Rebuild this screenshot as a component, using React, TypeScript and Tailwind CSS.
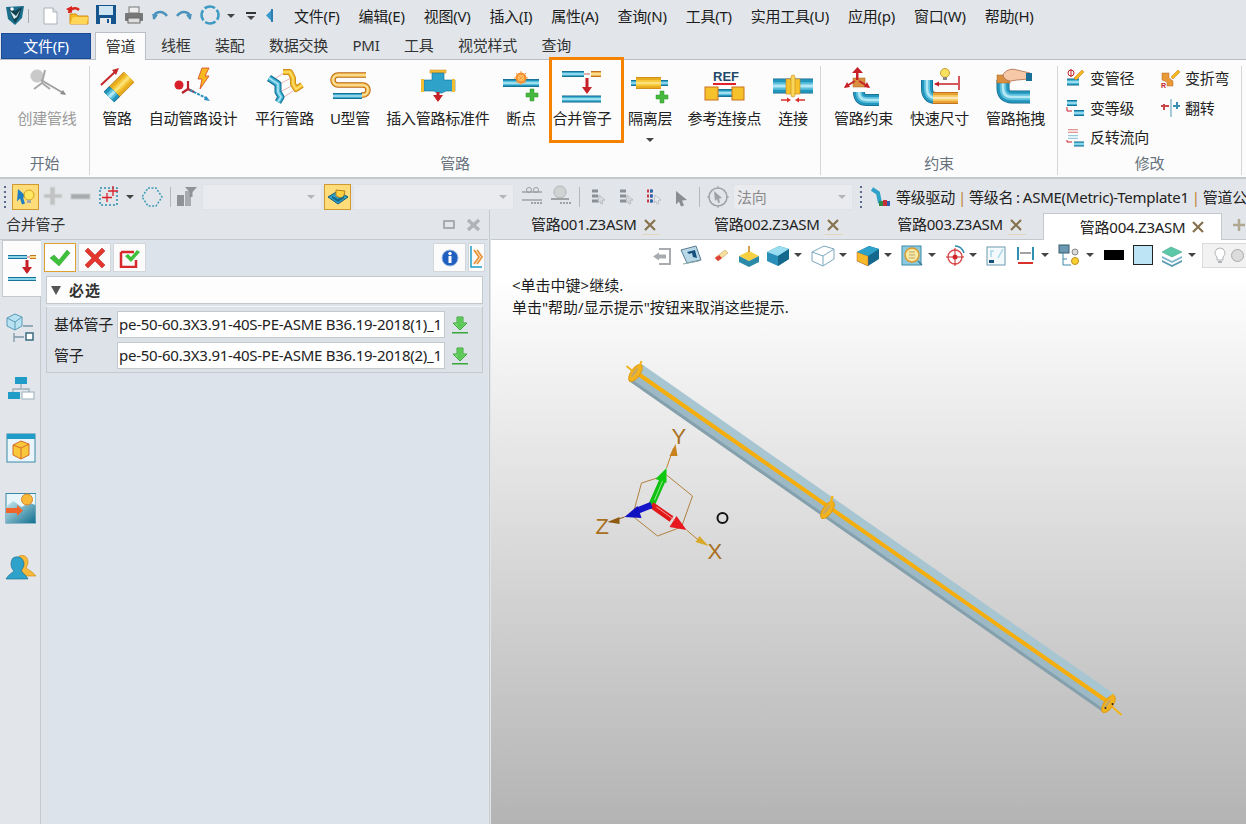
import type { ReactNode } from 'react'

// icons are drawn in page coordinates, so the viewBox is just the spot on the screenshot
function Ico({ x, y, w, h, className, children }: { x: number; y: number; w: number; h: number; className?: string; children: ReactNode }) {
  return (
    <svg width={w} height={h} viewBox={`${x} ${y} ${w} ${h}`} className={`shrink-0 ${className ?? ''}`}>
      {children}
    </svg>
  )
}

const BLUE = ['#14688c', '#2396bd', '#5cbfdc', '#b4e8f5']
const YEL = ['#c9861a', '#e8ae20', '#f6c838', '#fbe27a']
const ORG = ['#b5671c', '#e8a030', '#f5c860', '#fde9b8']

function Tube({ d, w, c = BLUE }: { d: string; w: number; c?: string[] }) {
  return (
    <g fill="none" strokeLinejoin="round">
      <path d={d} stroke={c[0]} strokeWidth={w} />
      <path d={d} stroke={c[1]} strokeWidth={w - 1.5} />
      <path d={d} stroke={c[2]} strokeWidth={w * 0.5} />
      <path d={d} stroke={c[3]} strokeWidth={Math.max(1, w * 0.2)} />
    </g>
  )
}

function DownArrow({ x, y, l, c = '#c62028' }: { x: number; y: number; l: number; c?: string }) {
  return (
    <g>
      <rect x={x - 1.500} y={y} width={3} height={l} fill={c} />
      <path d={`M${x - 5} ${y + l - 5}h10l-5 7z`} fill={c} />
    </g>
  )
}

function Plus({ x, y }: { x: number; y: number }) {
  return <path d={`M${x - 2} ${y - 6}h4v4h4v4h-4v4h-4v-4h-4v-4h4z`} fill="#46b93e" stroke="#2f9a2c" strokeWidth=".5" />
}

function Caret({ className }: { className?: string }) {
  return <span className={`w-0 h-0 shrink-0 border-x-[4px] border-x-transparent border-t-[4px] border-t-[#444] ${className ?? ''}`}></span>
}

const menu = ['文件(F)', '编辑(E)', '视图(V)', '插入(I)', '属性(A)', '查询(N)', '工具(T)', '实用工具(U)', '应用(p)', '窗口(W)', '帮助(H)']

function TopBar() {
  return (
    <div className="h-[32px] flex items-center bg-[#e2e6ea]">
      <Ico x={0} y={0} w={28} h={32}>
        <path d="M6 7l18 -1 -2 12 -7 7 -7-6z" fill="#1c6f8c" />
        <path d="M9 8l6 3 7-4-3 10-4 6-3-6z" fill="#12404f" />
        <path d="M10 11l6 5 4-6-3 7-3 2z" fill="#d8e8ec" />
        <circle cx={12} cy={9} r={1.8} fill="#fff" />
      </Ico>
      <span className="w-px h-[14px] bg-[#aaa] shrink-0"></span>
      <Ico x={29} y={0} w={30} h={32}>
        <path d="M44 8h9l4 4v12H44z" fill="#fff" stroke="#a9b1b8" />
        <path d="M53 8v4h4" fill="#dfe3e6" stroke="#a9b1b8" />
      </Ico>
      <Ico x={59} y={0} w={33} h={32}>
        <path d="M70 14h6l2 2h10v8H70z" fill="#f5b91e" stroke="#d3921a" />
        <path d="M70 24l3-7h15l-1 7z" fill="#ffd65a" />
        <path d="M69 13c1-5 7-6 10-3" fill="none" stroke="#d8261e" strokeWidth="2.5" />
        <path d="M66 9l6-3v7z" fill="#d8261e" />
      </Ico>
      <Ico x={92} y={0} w={28} h={32}>
        <path d="M96 5h20v19H96z" fill="#15548c" />
        <rect x={99} y={6} width={14} height={9} fill="#cfe5f2" />
        <rect x={100} y={18} width={11} height={6} fill="#e6e8ea" />
        <rect x={107} y={19} width={2} height={4} fill="#15548c" />
      </Ico>
      <Ico x={120} y={0} w={28} h={32}>
        <rect x={129} y={7} width={10} height={6} fill="#eee" stroke="#777" />
        <rect x={125} y={13} width={18} height={8} rx={1} fill="#777" />
        <rect x={128} y={18} width={12} height={5} fill="#ddd" stroke="#666" />
      </Ico>
      <Ico x={150} y={0} w={24} h={32}>
        <path d="M156 19c-1-7 8-10 13-3" fill="none" stroke="#4a93bd" strokeWidth="2.4" />
        <path d="M154 14l6 1-4 5z" fill="#4a93bd" />
      </Ico>
      <Ico x={178} y={0} w={24} h={32}>
        <path d="M196 19c1-7-8-10-13-3" fill="none" stroke="#4a93bd" strokeWidth="2.4" />
        <path d="M198 14l-6 1 4 5z" fill="#4a93bd" />
      </Ico>
      <Ico x={204} y={0} w={28} h={32}>
        <circle cx={218} cy={15} r={8.500} fill="none" stroke="#3e9bc4" strokeWidth="2.600" strokeDasharray="11 2.350" strokeDashoffset="6" />
      </Ico>
      <Caret className="ml-[3px]" />
      <span className="ml-[11px] w-[10px] flex flex-col items-center gap-[2px] shrink-0">
        <span className="w-[10px] h-[2px] bg-[#333]"></span>
        <Caret />
      </span>
      <Ico x={268} y={0} w={12} h={32} className="ml-[7px]">
        <path d="M271 15.500l5-5v10z" fill="#3a9ad0" />
        <rect x={276} y={9} width={2} height={13} fill="#2e7fb0" />
      </Ico>
      <div className="ml-[19px] flex gap-[19px] text-[#1c1c1c] whitespace-nowrap">
        {menu.map(m => <span key={m}>{m}</span>)}
      </div>
    </div>
  )
}

const tabs = ['线框', '装配', '数据交换', 'PMI', '工具', '视觉样式', '查询']

function TabBar() {
  return (
    <div className="h-[28px] flex items-end bg-[#e2e6ea] border-b border-[#b9bfc5] text-[#333]">
      <div className="ml-[1px] w-[90px] h-[26px] bg-[#2a5fb0] border border-[#1d4a94] text-white flex items-center justify-center">文件(F)</div>
      <div className="ml-[4px] w-[51px] h-[28px] -mb-px bg-[#fcfcfc] border border-b-0 border-[#b9bfc5] flex items-center justify-center">管道</div>
      <div className="ml-[15px] flex gap-[24.500px] h-[27px] items-center">
        {tabs.map(t => <span key={t}>{t}</span>)}
      </div>
    </div>
  )
}

function RibbonBtn({ label, className, disabled, more, children }: { label: string; className: string; disabled?: boolean; more?: boolean; children: ReactNode }) {
  return (
    <div className={`flex flex-col items-center shrink-0 ${className}`}>
      <div className="h-[40px] flex items-center justify-center">{children}</div>
      <span className={`mt-[2px] leading-[20px] whitespace-nowrap ${disabled ? 'text-[#9a9a9a]' : 'text-[#222]'}`}>{label}</span>
      {more && <Caret className="mt-[10px]" />}
    </div>
  )
}

function GroupLabel({ children }: { children: string }) {
  return <span className="mt-auto mb-[2px] text-center leading-[20px] text-[#68727c]">{children}</span>
}

function Ribbon() {
  return (
    <div className="h-[119px] bg-[#fcfcfc] border-b-2 border-[#c4c9ce] flex">
      <div className="w-[90px] mt-[6px] mb-[2px] border-r border-[#d4d7da] flex flex-col">
        <RibbonBtn label="创建管线" className="ml-[17px] w-[60px]" disabled>
          <Ico x={24} y={66} w={44} h={40}>
            <circle cx={36} cy={76} r={6.500} fill="#c9c9c9" stroke="#e2e2e2" strokeDasharray="2 1" />
            <path d="M40 80l24 14" stroke="#a0a0a0" strokeWidth="2" />
            <path d="M44 70l-3 13 -8 6M41 83l8 6" stroke="#a8a8a8" strokeWidth="2" fill="none" />
            <path d="M65 95l-6-1 3-4z" fill="#909090" />
          </Ico>
        </RibbonBtn>
        <GroupLabel>开始</GroupLabel>
      </div>

      <div className="w-[731px] mt-[6px] mb-[2px] border-r border-[#d4d7da] flex flex-col">
        <div className="flex h-[84px]">
          <RibbonBtn label="管路" className="ml-[7px] w-[40px]">
            <Ico x={98} y={66} w={38} h={40}>
              <path d="M101 85l15-14" stroke="#c6282a" strokeWidth="2" />
              <path d="M119 68l-7 2 4 5z" fill="#c6282a" />
              <Tube d="M129 77L113 93" w={15} c={YEL} />
              <Tube d="M114.500 91.500L109 97" w={15} />
            </Ico>
          </RibbonBtn>
          <RibbonBtn label="自动管路设计" className="ml-[11px] w-[90px]">
            <Ico x={174} y={66} w={40} h={40}>
              <circle cx={180} cy={85} r={4.500} fill="#d8202a" />
              <path d="M189 89v-8M189 89l-6 4M189 89l6 3" stroke="#b8202a" strokeWidth="2.2" />
              <path d="M191 90l18 9" stroke="#2e8fc0" strokeWidth="2" strokeDasharray="3 1" />
              <path d="M211 101l-6-1 2-4z" fill="#2e8fc0" />
              <path d="M203 68h7l-4 8h4l-9 13 2-10h-4z" fill="#f6b91e" stroke="#d8401e" strokeWidth=".8" />
            </Ico>
          </RibbonBtn>
          <RibbonBtn label="平行管路" className="ml-[17px] w-[59px]">
            <Ico x={264} y={66} w={40} h={40}>
              <path d="M272 80l12-8M277 85l13-7M281 91l11-6M283 97l9-6" stroke="#e6a0a0" strokeWidth=".8" />
              <Tube d="M282 72h7l3 6v6l3 5 6-4" w={6} c={YEL} />
              <Tube d="M268 78l9 6v8l3 5-3 5" w={7} />
            </Ico>
          </RibbonBtn>
          <RibbonBtn label="U型管" className="ml-[16px] w-[40px]">
            <Ico x={329} y={66} w={42} h={40}>
              <Tube d="M366 75H338a5 5 0 0 0 0 10h25a5 5 0 0 1 0 10h-2" w={5.500} c={ORG} />
              <Tube d="M333 96H362" w={6} />
            </Ico>
          </RibbonBtn>
          <RibbonBtn label="插入管路标准件" className="ml-[16px] w-[104px]">
            <Ico x={418} y={66} w={40} h={40}>
              <rect x={430} y={70} width={16} height={3} fill="#f3bd33" stroke="#c9861a" strokeWidth=".5" />
              <path d="M432 73h12v7h11v11h-9l-4 2h-5l-3-2h-10V80h8z" fill="#2ea2c8" stroke="#176f92" strokeWidth=".6" />
              <rect x={421} y={79} width={3} height={13} fill="#f3bd33" />
              <rect x={452} y={79} width={3} height={13} fill="#f3bd33" />
              <DownArrow x={438} y={92} l={8} />
            </Ico>
          </RibbonBtn>
          <RibbonBtn label="断点" className="ml-[16px] w-[30px]">
            <Ico x={500} y={66} w={42} h={40}>
              <Tube d="M503 83H539" w={8} />
              <circle cx={521} cy={78} r={5.500} fill="#f88a30" />
              <circle cx={521} cy={78} r={3} fill="#ffe080" />
              <path d="M521 71v14M514 78h14M516 73l10 10M526 73l-10 10" stroke="#f9a040" strokeWidth="1" />
              <Plus x={532} y={95} />
            </Ico>
          </RibbonBtn>
          <div className="relative ml-[16px] w-[60px] shrink-0">
            <RibbonBtn label="合并管子" className="w-[60px]">
              <Ico x={560} y={66} w={44} h={40}>
                <Tube d="M562 74H584" w={6} />
                <path d="M584 74h6" stroke="#c8605a" strokeWidth="1" />
                <Tube d="M591 74H601" w={6} c={ORG} />
                <DownArrow x={587} y={78} l={14} />
                <Tube d="M562 99H601" w={7} />
              </Ico>
            </RibbonBtn>
            <div className="absolute -left-[3px] -top-[9px] w-[75px] h-[86px] border-[3px] border-[#f58200]"></div>
          </div>
          <RibbonBtn label="隔离层" className="ml-[16px] w-[44px]" more>
            <Ico x={629} y={66} w={42} h={40}>
              <Tube d="M631 83H668" w={6} />
              <Tube d="M636 83H661" w={12} c={YEL} />
              <Plus x={662} y={97} />
            </Ico>
          </RibbonBtn>
          <RibbonBtn label="参考连接点" className="ml-[15px] w-[75px]">
            <Ico x={703} y={66} w={44} h={40}>
              <text x={713} y={81} fontSize="13" fontWeight="700" letterSpacing="0" fill="#1f4a6a" fontFamily="Liberation Sans, sans-serif">REF</text>
              <rect x={713} y={83} width={23} height={2} fill="#e0202a" />
              <Tube d="M716 93H734" w={8} />
              <rect x={705} y={87} width={13} height={13} fill="#f6c22c" stroke="#c9701c" />
              <rect x={732} y={87} width={12} height={13} fill="#f6c22c" stroke="#c9701c" />
            </Ico>
          </RibbonBtn>
          <RibbonBtn label="连接" className="ml-[16px] w-[30px]">
            <Ico x={771} y={66} w={44} h={40}>
              <Tube d="M773 86H813" w={15} />
              <rect x={786} y={79} width={14} height={15} fill="#f6c22c" stroke="#c9861a" strokeWidth=".6" />
              <rect x={791} y={75} width={4} height={22} rx={2} fill="#f9d65a" stroke="#c9861a" strokeWidth=".6" />
              <path d="M781 100h8M805 100h-8" stroke="#d8302a" strokeWidth="1.500" />
              <path d="M791 100l-4-2.500v5zM795 100l4-2.500v5z" fill="#d8302a" />
            </Ico>
          </RibbonBtn>
        </div>
        <GroupLabel>管路</GroupLabel>
      </div>

      <div className="w-[237px] mt-[6px] mb-[2px] border-r border-[#d4d7da] flex flex-col">
        <div className="flex">
          <RibbonBtn label="管路约束" className="ml-[13px] w-[59px]">
            <Ico x={841} y={66} w={44} h={40}>
              <Tube d="M858 92c0 6 3 8 8 8H878" w={12} />
              <rect x={852} y={78} width={12} height={9} fill="#d89040" stroke="#a8601c" strokeWidth=".5" />
              <rect x={855} y={70} width={2.500} height={10} fill="#c62028" />
              <path d="M851 73h11l-5.500-6z" fill="#c62028" />
              <path d="M844 87l10-6M868 87l-10-6" stroke="#c62028" strokeWidth="2" />
              <path d="M843 88l3-6 3 5zM869 88l-3-6-3 5z" fill="#c62028" />
            </Ico>
          </RibbonBtn>
          <RibbonBtn label="快速尺寸" className="ml-[17px] w-[59px]">
            <Ico x={917} y={66} w={44} h={40}>
              <Tube d="M926 80v8c0 7 3 10 9 10" w={12} />
              <Tube d="M932 98H957" w={12} c={ORG} />
              <circle cx={944} cy={73} r={4.500} fill="#f8e060" stroke="#c9a030" />
              <rect x={942} y={77} width={4} height={3} fill="#888" />
              <path d="M934 84h23" stroke="#c62028" strokeWidth="1.500" />
              <path d="M958 76v14" stroke="#c62028" strokeWidth="1.500" />
              <path d="M933 84l5-2.500v5z" fill="#c62028" />
            </Ico>
          </RibbonBtn>
          <RibbonBtn label="管路拖拽" className="ml-[17px] w-[59px]">
            <Ico x={993} y={66} w={44} h={40}>
              <Tube d="M1002 80v8c0 6 3 9 9 9h18" w={13} />
              <rect x={996} y={75} width={13} height={8} fill="#d89040" stroke="#a8601c" strokeWidth=".5" />
              <path d="M1002 75c2-5 9-7 14-5l13 3-1 6-12 1-6 1c-4 0-7-2-8-6z" fill="#f6c8a8" stroke="#a05a3a" strokeWidth=".7" />
              <rect x={1025} y={73} width={6} height={8} fill="#1a6f96" />
            </Ico>
          </RibbonBtn>
        </div>
        <GroupLabel>约束</GroupLabel>
      </div>

      <div className="w-[184px] mt-[6px] mb-[2px] border-r border-[#d4d7da] flex flex-col">
        <div className="ml-[8px] mt-[2px] grid grid-cols-[94px_auto] gap-y-[9.500px] leading-[20px] text-[#222] whitespace-nowrap">
          <div className="flex items-center gap-[6px]">
            <Ico x={1066} y={68} w={18} h={20}>
              <Tube d="M1067 82h12" w={7} />
              <path d="M1074 78l8-8 2 2-8 8z" fill="#f6b91e" stroke="#c9701c" strokeWidth=".5" />
              <circle cx={1071} cy={73} r={3} fill="none" stroke="#c62028" />
              <path d="M1071 69v8" stroke="#c62028" />
            </Ico>
            <span>变管径</span>
          </div>
          <div className="flex items-center gap-[5px]">
            <Ico x={1160} y={68} w={20} h={20}>
              <path d="M1162 73h7v5l4 3v5h-6v-4l-5-2z" fill="#e89a38" stroke="#b5671c" strokeWidth=".5" />
              <path d="M1171 77l7-7 2 2-7 7z" fill="#f6b91e" stroke="#c9701c" strokeWidth=".5" />
              <text x={1161} y={88} fontSize="7" fontWeight="700" fill="#c62028" fontFamily="Liberation Sans, sans-serif">R</text>
            </Ico>
            <span>变折弯</span>
          </div>
          <div className="flex items-center gap-[6px]">
            <Ico x={1066} y={98} w={18} h={20}>
              <Tube d="M1067 103H1077" w={6} />
              <Tube d="M1074 113H1084" w={6} />
              <path d="M1067 107v4h5" fill="none" stroke="#c62028" />
            </Ico>
            <span>变等级</span>
          </div>
          <div className="flex items-center gap-[5px]">
            <Ico x={1160} y={98} w={20} h={20}>
              <path d="M1171 99v18" stroke="#a6cbd8" strokeWidth="2" />
              <path d="M1161 106h8M1164 104v6" stroke="#c6484a" strokeWidth="2" />
              <path d="M1173 106h7M1177 102v7" stroke="#3a90b4" strokeWidth="2" />
            </Ico>
            <span>翻转</span>
          </div>
          <div className="flex items-center gap-[6px]">
            <Ico x={1066} y={127} w={18} h={20}>
              <Tube d="M1068 131H1078" w={4} c={['#d88a8a', '#f0c0c0', '#f4d0d0', '#fbe4e4']} />
              <Tube d="M1068 137H1078" w={4} c={['#8ac0d4', '#bde3f0', '#d4edf5', '#eaf7fb']} />
              <Tube d="M1074 144H1084" w={5} />
              <path d="M1067 140v2h5" stroke="#c62028" fill="none" />
            </Ico>
            <span>反转流向</span>
          </div>
        </div>
        <GroupLabel>修改</GroupLabel>
      </div>
    </div>
  )
}

function Combo({ className, text }: { className: string; text?: string }) {
  return (
    <div className={`h-[26px] bg-[#e9ebee] border border-[#dfe2e6] flex items-center shrink-0 text-[#8a8a8a] ${className}`}>
      <span className="ml-[3px]">{text}</span>
      <span className="ml-auto mr-[6px] w-0 h-0 border-x-[4px] border-x-transparent border-t-[4px] border-t-[#b5b5b5]"></span>
    </div>
  )
}

function Grip({ className }: { className?: string }) {
  return (
    <span className={`flex flex-col gap-[3px] shrink-0 ${className ?? ''}`}>
      <span className="w-[2px] h-[2px] bg-[#5a6a90]"></span>
      <span className="w-[2px] h-[2px] bg-[#5a6a90]"></span>
      <span className="w-[2px] h-[2px] bg-[#5a6a90]"></span>
      <span className="w-[2px] h-[2px] bg-[#5a6a90]"></span>
      <span className="w-[2px] h-[2px] bg-[#5a6a90]"></span>
    </span>
  )
}

function SelectIcon({ x, c = '#8a8f96' }: { x: number; c?: string }) {
  return (
    <Ico x={x} y={186} w={18} h={22}>
      <path d={`M${x + 3} 191h6M${x + 3} 196h6M${x + 3} 201h6`} stroke={c} strokeWidth="3" />
      <path d={`M${x + 10} 195l6 5-3 .5 1 3-2 .5-1-3-2 2z`} fill="#d8dadd" stroke="#9a9ea3" strokeWidth=".5" />
    </Ico>
  )
}

function Sep({ className }: { className: string }) {
  return <span className={`w-px h-[20px] bg-[#b5b9bd] shrink-0 ${className}`}></span>
}

function Toolbar() {
  return (
    <div className="h-[31px] bg-[#e2e6ea] flex items-center overflow-hidden whitespace-nowrap pt-[5px]">
      <Grip className="ml-[4px]" />
      <div className="ml-[6px] w-[27px] h-[26px] shrink-0 bg-[#ffdc7a] border border-[#d09a30] flex items-center justify-center">
        <svg width="22" height="20" viewBox="0 0 22 20">
          <path d="M3 2l9 8-4 .5 2 6-3 1-2-6-3 3z" fill="#1f7fc0" />
          <circle cx={14} cy={8} r={5} fill="#ffe860" stroke="#d8a020" />
          <rect x={12} y={13} width={4} height={3} fill="#a8a8a8" />
        </svg>
      </div>
      <Ico x={42} y={184} w={22} h={26} className="ml-[3px]">
        <path d="M50 187h5v7h7v4h-7v7h-5v-7h-6v-4h6z" fill="#c0c2c4" stroke="#d8dadc" />
      </Ico>
      <Ico x={68} y={184} w={24} h={26} className="ml-[4px]">
        <rect x={71} y={194} width={19} height={5} fill="#a8aaac" stroke="#c8cacc" />
      </Ico>
      <Ico x={96} y={184} w={24} h={26} className="ml-[4px]">
        <rect x={100} y={188} width={17} height={17} fill="none" stroke="#2e8fb0" strokeWidth="1.500" strokeDasharray="2 2" />
        <path d="M113 186v10M108 191h10M107 193v9M102 197.500h10" stroke="#d8202a" strokeWidth="1.300" />
      </Ico>
      <Caret className="ml-[6px]" />
      <Ico x={138} y={184} w={28} h={26} className="ml-[4px]">
        <path d="M148 188h8l6 9-6 9h-8l-6-9z" fill="none" stroke="#3e9bb8" strokeWidth="1.500" strokeDasharray="2 1.500" />
      </Ico>
      <Sep className="ml-[4px]" />
      <Ico x={175} y={184} w={26} h={26} className="ml-[3px]">
        <rect x={178} y={195} width={7} height={11} fill="#8f9397" />
        <rect x={186} y={191} width={6} height={15} fill="#a8acb0" />
        <path d="M186 187h12l-4.500 5v5h-3v-5z" fill="#8f9397" />
      </Ico>
      <Combo className="ml-[2px] w-[120px]" />
      <div className="ml-[2px] w-[27px] h-[26px] bg-[#ffdc7a] border border-[#d09a30] flex items-center justify-center shrink-0">
        <svg width="24" height="22" viewBox="0 0 24 22">
          <path d="M2 11l10-6 10 6-10 7z" fill="#2ea2c8" stroke="#145a7c" />
          <path d="M10 4l9 1-2 8-7-3z" fill="#ffd040" stroke="#b8801c" />
          <path d="M6 10l6 3 6-3v2l-6 4-6-4z" fill="#14688c" />
        </svg>
      </div>
      <Combo className="ml-[2px] w-[161px]" />
      <Ico x={518} y={184} w={28} h={26} className="ml-[4px]">
        <path d="M522 192h20M522 200h20" stroke="#a0a3a6" strokeWidth="1.500" />
        <circle cx={529} cy={190} r={2.500} fill="none" stroke="#9a9da0" />
        <circle cx={536} cy={190} r={2.500} fill="none" stroke="#9a9da0" />
        <path d="M531 203h11" stroke="#a0a3a6" strokeWidth="2" strokeDasharray="2 1" />
      </Ico>
      <Ico x={546} y={184} w={28} h={26}>
        <circle cx={560} cy={192} r={6} fill="#d0d2d4" stroke="#b0b2b4" />
        <path d="M551 199h18" stroke="#a0a3a6" strokeWidth="2" />
        <path d="M560 203h11" stroke="#a0a3a6" strokeWidth="2" strokeDasharray="2 1" />
      </Ico>
      <Sep className="ml-[5px]" />
      <span className="ml-[9px] flex"><SelectIcon x={589} /></span>
      <span className="ml-[10px] flex"><SelectIcon x={617} /></span>
      <span className="ml-[10px] flex">
        <Ico x={645} y={186} w={18} h={22}>
          <path d="M647 191h6M647 196h6M647 201h6" stroke="#c8384a" strokeWidth="3" strokeDasharray="2 1" />
          <path d="M650 191h3M650 196h3M650 201h3" stroke="#2e6ab0" strokeWidth="3" />
          <path d="M655 195l6 5-3 .5 1 3-2 .5-1-3-2 2z" fill="#e8eaec" stroke="#9a9ea3" strokeWidth=".5" />
        </Ico>
      </span>
      <Ico x={673} y={186} w={20} h={22} className="ml-[10px]">
        <path d="M676 191l11 9-5 .5 2 5-3 1-2-5-3 3z" fill="#8a8d91" />
      </Ico>
      <Sep className="ml-[6px]" />
      <Ico x={704} y={184} w={28} h={26} className="ml-[4px]">
        <circle cx={718} cy={197} r={9} fill="none" stroke="#a0a3a6" strokeWidth="1.500" />
        <path d="M718 186v3M718 205v3M707 197h3M726 197h3" stroke="#a0a3a6" />
        <path d="M714 191l8 7-3 .5 1 4-2 .5-1-4-2 2z" fill="#a0a3a6" />
      </Ico>
      <Combo className="ml-[1px] w-[120px]" text="法向" />
      <Grip className="ml-[7px]" />
      <Ico x={868} y={184} w={24} h={26} className="ml-[6px]">
        <path d="M872 189l6 4 2 10" fill="none" stroke="#2ea2c8" strokeWidth="4" />
        <rect x={879} y={201} width={4} height={5} fill="#2e8a48" />
        <rect x={883} y={200} width={4} height={6} fill="#c8303a" />
        <rect x={887} y={201} width={3} height={5} fill="#2e5fb0" />
      </Ico>
      <span className="ml-[4px] text-[#222] [word-spacing:-0.700px]">等级驱动 <span className="text-[#c08030]">|</span> 等级名 : ASME(Metric)-Template1 <span className="text-[#c08030]">|</span> 管道公</span>
    </div>
  )
}

function DownloadBtn() {
  return (
    <svg width="18" height="20" viewBox="0 0 18 20" className="shrink-0 block">
      <path d="M6 2h6v6h4l-7 7-7-7h4z" fill="#7fdc78" stroke="#3aa63a" />
      <path d="M7 3h4v6h3l-5 5-3-3z" fill="#5cc858" />
      <rect x={1} y={17} width={16} height={1.500} fill="#3aa63a" />
    </svg>
  )
}

function SideTab({ className, children }: { className: string; children: ReactNode }) {
  return <div className={`flex justify-center ${className}`}>{children}</div>
}

function Panel() {
  return (
    <div className="w-[488px] shrink-0 flex flex-col bg-[#e2e6ea]">
      <div className="h-[29px] flex items-center text-[#333]">
        <span className="ml-[6px]">合并管子</span>
        <span className="ml-auto w-[12px] h-[9px] border-[2px] border-[#a8acb0] rounded-[1px]"></span>
        <svg width="15" height="12" viewBox="0 0 15 12" className="ml-[11px] mr-[7px]">
          <path d="M2 1l11 10M13 1L2 11" stroke="#b0b4b8" strokeWidth="3.500" />
        </svg>
      </div>
      <div className="flex-1 flex min-h-0 border-t border-[#c4c9ce]">
        <div className="w-[41px] shrink-0 flex flex-col items-start pl-[2px] border-r border-[#c4c9ce]">
          <div className="w-[39px] -mr-px h-[57px] bg-[#fcfcfc] border border-[#c4c9ce] border-r-0 flex items-center justify-center relative">
            <svg width="30" height="30" viewBox="0 0 30 30">
              <Tube d="M1 3H20" w={4} />
              <path d="M20 3h3" stroke="#c8605a" />
              <Tube d="M23 3H29" w={4} c={ORG} />
              <DownArrow x={20} y={6} l={12} />
              <Tube d="M1 25H29" w={4} />
            </svg>
          </div>
          <SideTab className="w-[37px] mt-[16px]">
            <svg width="30" height="30" viewBox="6 313 30 30">
              <path d="M7 318l8-4 7 3v9l-7 4-8-4z" fill="#b8e2f2" stroke="#5a9ab8" />
              <path d="M15 322v8M7 318l8 4 7-5" fill="none" stroke="#5a9ab8" />
              <path d="M23 326h10M14 333v9M14 337h10" stroke="#7a98a8" strokeWidth="1.300" />
              <rect x={26} y={333} width={7} height={7} fill="#fff" stroke="#3a6a80" strokeWidth="1.500" />
            </svg>
          </SideTab>
          <SideTab className="w-[37px] mt-[31px]">
            <svg width="28" height="26" viewBox="6 374 28 26">
              <rect x={14} y={377} width={12} height={7} fill="#1f9cc8" />
              <path d="M20 384v5M12 393v-4h16v4" fill="none" stroke="#9ab0bc" strokeWidth="1.300" />
              <rect x={7} y={392} width={12} height={7} fill="#1f9cc8" />
              <rect x={21} y={392} width={12} height={7} fill="#fff" stroke="#9ab0bc" />
            </svg>
          </SideTab>
          <SideTab className="w-[37px] mt-[33px]">
            <svg width="30" height="30" viewBox="5 433 30 30">
              <rect x={6} y={434} width={28} height={28} fill="#eaf6fb" stroke="#3a8aa8" />
              <rect x={6} y={434} width={28} height={5} fill="#1f9cc8" />
              <path d="M12 445l8-4 8 3v11l-8 4-8-4z" fill="#f8c83a" stroke="#d86a2a" />
              <path d="M12 445l8 3 8-4M20 448v11" fill="none" stroke="#d86a2a" />
            </svg>
          </SideTab>
          <SideTab className="w-[37px] mt-[30px]">
            <svg width="31" height="31" viewBox="4 493 31 31">
              <defs>
                <linearGradient id="hill" x1="0" y1="0" x2="1" y2="1">
                  <stop offset="0" stopColor="#c8e8f2" />
                  <stop offset="1" stopColor="#12708f" />
                </linearGradient>
              </defs>
              <rect x={5} y={493.500} width={30} height={29.500} fill="#e8f6fa" stroke="#3a8aa8" />
              <path d="M5.500 506l7-5 8 6 8-4 6 2v18H5.500z" fill="url(#hill)" />
              <circle cx={26} cy={499.500} r={5.500} fill="#f8b83a" stroke="#d8862a" />
              <path d="M5 508h11v-3l6 5.500-6 5.500v-3H5z" fill="#f0662a" />
            </svg>
          </SideTab>
          <SideTab className="w-[37px] mt-[31px]">
            <svg width="31" height="26" viewBox="4 555 31 26">
              <path d="M18 556c5-2 9 1 9 6 0 3-1 4-2 6 3 2 7 4 10 8H22z" fill="#f6b93a" stroke="#c9861a" strokeWidth=".6" />
              <path d="M12 558c5-3 11 0 11 6 0 3-2 5-3 7 2 2 5 4 7 8H5c2-4 6-6 8-8-2-2-3-4-3-7 0-3 1-5 2-6z" fill="#2ea2c8" stroke="#14688c" strokeWidth=".6" />
            </svg>
          </SideTab>
        </div>
        <div className="flex-1 min-w-0 bg-[#dde3eb] flex flex-col pl-[3px] pr-[3px] pt-[3px]">
          <div className="h-[29px] flex items-stretch">
            <div className="w-[32px] bg-[#fdfdfd] border border-[#e0a030] flex items-center justify-center">
              <svg width="22" height="18" viewBox="0 0 22 18"><path d="M1 9l4-3 5 5 8-10 3 3-11 13z" fill="#3fc03a" stroke="#2a9a2a" strokeWidth=".5" /></svg>
            </div>
            <div className="ml-[2px] w-[33px] bg-[#fbfbfb] border border-[#d4d7da] flex items-center justify-center">
              <svg width="22" height="22" viewBox="0 0 22 22"><path d="M4 1l7 7 7-7 3 3-7 7 7 7-3 3-7-7-7 7-3-3 7-7-7-7z" fill="#e2362e" stroke="#b8201e" strokeWidth=".5" /></svg>
            </div>
            <div className="ml-[2px] w-[33px] bg-[#fbfbfb] border border-[#d4d7da] flex items-center justify-center">
              <svg width="22" height="20" viewBox="0 0 22 20">
                <path d="M2 4h13M2 4v15h15v-7" fill="none" stroke="#d8282a" strokeWidth="2.500" />
                <path d="M6 8l3-2 3 3 6-7 3 2-9 10z" fill="#3fc03a" />
              </svg>
            </div>
            <div className="ml-auto w-[33px] bg-[#fbfbfb] border border-[#d4d7da] flex items-center justify-center">
              <svg width="18" height="18" viewBox="0 0 18 18">
                <circle cx={9} cy={9} r={8} fill="#1f5fc0" stroke="#9ab8e0" />
                <rect x={7.500} y={7} width={3} height={7} fill="#fff" />
                <circle cx={9} cy={4.500} r={1.700} fill="#fff" />
              </svg>
            </div>
            <div className="ml-[2px] w-[17px] bg-[#fbfbfb] border border-[#d4d7da] flex items-center justify-center">
              <svg width="15" height="25" viewBox="0 0 15 25">
                <path d="M2 1v21h11" fill="none" stroke="#1f9cc8" strokeWidth="1.500" />
                <path d="M5 5l5 7-5 7M8 5l5 7-5 7" fill="none" stroke="#e8943a" strokeWidth="1.800" />
              </svg>
            </div>
          </div>
          <div className="mt-[4px] ml-[2px] mr-[2px] h-[28px] bg-[#fdfdfd] border border-[#c4c9ce] flex items-center font-bold text-[#333]">
            <span className="ml-[4px] w-0 h-0 border-x-[5px] border-x-transparent border-t-[9px] border-t-[#555]"></span>
            <span className="ml-[8px] tracking-[1px]">必选</span>
          </div>
          <div className="mt-[2px] ml-[2px] mr-[2px] h-[67px] border border-[#c4c9ce] bg-[#dde1e8] border-t-[#f2f4f6] pl-[7px] flex flex-col gap-[4px] pt-[4px] text-[#222]">
            {[['基体管子', '(1)_1'], ['管子', '(2)_1']].map(([label, suffix]) => (
              <div key={label} className="flex items-center h-[27px]">
                <span className="w-[63px] shrink-0 whitespace-nowrap">{label}</span>
                <div className="w-[328px] h-[27px] shrink-0 bg-white border border-[#c4c9ce] overflow-hidden whitespace-nowrap pl-[1px] leading-[25px]">{`pe-50-60.3X3.91-40S-PE-ASME B36.19-2018${suffix}`}</div>
                <span className="ml-[6px] flex"><DownloadBtn /></span>
              </div>
            ))}
          </div>
        </div>
      </div>
    </div>
  )
}

function CloseX({ line }: { line?: boolean }) {
  return (
    <span className="relative flex shrink-0">
      <svg width="14" height="12" viewBox="0 0 14 12">
        <path d="M2 1l10 10M12 1L2 11" stroke="#85724e" strokeWidth="2.200" />
      </svg>
      {line && <span className="absolute -left-[1px] -right-[3px] -bottom-[4px] h-px bg-[#e0d8b8]"></span>}
    </span>
  )
}

const docs = ['管路001.Z3ASM', '管路002.Z3ASM', '管路003.Z3ASM']

function DocTabs() {
  return (
    <div className="h-[30px] shrink-0 bg-[#e2e6ea] flex items-end text-[#222] whitespace-nowrap border-b border-[#c4c9ce]">
      <div className="ml-[40px] flex gap-[57.500px] h-[29px] items-center">
        {docs.map(d => (
          <span key={d} className="flex items-center gap-[6px]">{d}<CloseX line /></span>
        ))}
      </div>
      <div className="ml-[20px] w-[179px] h-[27px] -mb-px bg-white border border-b-0 border-[#c4c9ce] flex items-center pl-[36px] gap-[6px]">
        管路004.Z3ASM<CloseX />
      </div>
      <svg width="14" height="14" viewBox="0 0 14 14" className="ml-[10px] mb-[7px] shrink-0">
        <path d="M7 1v12M1 7h12" stroke="#b0a890" strokeWidth="2.500" />
      </svg>
    </div>
  )
}

function ViewBar() {
  return (
    <div className="h-[30px] flex items-center pl-[161px] overflow-hidden">
      <Ico x={653} y={241} w={22} h={28}>
        <path d="M660 249h11v15h-11" fill="none" stroke="#a8acb0" strokeWidth="2" />
        <path d="M654 256.500l6-4v2h7v4h-7v2z" fill="#a8acb0" />
      </Ico>
      <Ico x={679} y={241} w={26} h={28} className="ml-[4px]">
        <path d="M682 250l15-4 5 14-14 3z" fill="#b8d8e8" stroke="#5a7a90" />
        <path d="M688 252l8-2 2 8-4-1-1-4-3 1z" fill="#14507c" />
        <path d="M684 264l16-3" stroke="#8aa" />
      </Ico>
      <Ico x={712} y={241} w={20} h={28} className="ml-[7px]">
        <path d="M716 258l10-8 3 3-10 8z" fill="#f6e0a0" stroke="#b89040" strokeWidth=".5" />
        <path d="M716 258l4-3 3 3-4 3z" fill="#e0403a" />
      </Ico>
      <Ico x={738} y={241} w={24} h={28} className="ml-[6px]">
        <path d="M740 256l10-5 10 5-10 5z" fill="#f6d040" />
        <path d="M740 256l10 5v6l-10-5zM760 256l-10 5v6l10-5z" fill="#2a8aa8" />
        <path d="M750 252v-6" stroke="#c9801c" strokeWidth="1.500" />
      </Ico>
      <Ico x={767} y={241} w={25} h={28} className="ml-[5px]">
        <path d="M768 252l12-6 10 3v10l-11 7-11-5z" fill="#2a8fb8" />
        <path d="M768 252l11 4 11-7-10-3z" fill="#9adcf0" />
        <path d="M779 256v10l11-7V249z" fill="#14688c" />
      </Ico>
      <Caret className="ml-[3px]" />
      <Ico x={810} y={241} w={26} h={28} className="ml-[8px]">
        <path d="M812 252l12-6 10 3v10l-11 7-11-5z" fill="#fff" stroke="#7aa8c0" />
        <path d="M812 252l11 4 11-7M823 256v10" fill="none" stroke="#7aa8c0" />
      </Ico>
      <Caret className="ml-[3px]" />
      <Ico x={854} y={241} w={26} h={28} className="ml-[8px]">
        <path d="M856 252l12-6 10 3v10l-11 7-11-5z" fill="#14688c" />
        <path d="M856 252l11 4v10l-11-5z" fill="#f6b92c" stroke="#c96a1c" strokeWidth=".5" />
        <path d="M867 256l11-7-10-3-12 6z" fill="#2ea2c8" />
      </Ico>
      <Caret className="ml-[3px]" />
      <Ico x={898} y={241} w={24} h={28} className="ml-[8px]">
        <rect x={900} y={246} width={19} height={19} fill="#8ccae0" stroke="#3a8aa8" />
        <circle cx={910} cy={255} r={7} fill="#f8e8a0" stroke="#d89a30" strokeWidth="1.500" />
        <path d="M907 252h6M907 255h6M907 258h6" stroke="#b8a878" />
        <path d="M916 261l4 4" stroke="#3a7a98" strokeWidth="1.500" />
      </Ico>
      <Caret className="ml-[4px]" />
      <Ico x={944} y={241} w={22} h={28} className="ml-[8px]">
        <circle cx={955} cy={257} r={7} fill="none" stroke="#d8484a" strokeWidth="1.300" />
        <circle cx={955} cy={257} r={2.500} fill="#d8282a" />
        <path d="M946 257h18M955 248v18" stroke="#c8282a" />
        <path d="M955 246a10 10 0 0 1 9 7" fill="none" stroke="#2e8fb0" strokeWidth="1.500" />
      </Ico>
      <Caret className="ml-[3px]" />
      <Ico x={986} y={241} w={24} h={28} className="ml-[7px]">
        <rect x={989} y={247} width={18} height={18} fill="#f4f9fb" stroke="#6a9ab0" />
        <path d="M996 251h-3v6M1005 249l-5 9" fill="none" stroke="#a8d8e8" strokeWidth="1.500" />
        <rect x={991} y={260} width={5} height={3} fill="#14507c" />
      </Ico>
      <Ico x={1018} y={241} w={20} h={28} className="ml-[8px]">
        <path d="M1020 247v13M1035 247v13" stroke="#2e8fb0" strokeWidth="2" />
        <path d="M1022 253h11" stroke="#444" />
        <path d="M1020 263h15" stroke="#d8302a" strokeWidth="2" />
      </Ico>
      <Caret className="ml-[5px]" />
      <Ico x={1060} y={241} w={24} h={28} className="ml-[9px]">
        <rect x={1061} y={245} width={10} height={8} fill="#6a98b0" stroke="#385a70" />
        <path d="M1065 253v12h8M1065 259h4" fill="none" stroke="#3a8aa8" />
        <circle cx={1077} cy={252} r={3} fill="#d8dadc" stroke="#888" />
        <circle cx={1077} cy={261} r={3.500} fill="#f8d030" stroke="#c09020" />
      </Ico>
      <Caret className="ml-[4px]" />
      <span className="ml-[10px] w-[20px] h-[10px] shrink-0 bg-black"></span>
      <span className="ml-[9px] w-[20px] h-[20px] shrink-0 bg-[#bde4f4] border border-[#222]"></span>
      <Ico x={1162} y={241} w={24} h={28} className="ml-[8px]">
        <path d="M1163 260l10 5 10-5v2l-10 5-10-5z" fill="#5a9ab0" />
        <path d="M1163 256l10 5 10-5v2l-10 5-10-5z" fill="#7ab4c8" />
        <path d="M1163 252l9-5 11 5-10 5z" fill="#5cc8a8" stroke="#3a9a80" strokeWidth=".5" />
      </Ico>
      <Caret className="ml-[3px]" />
      <div className="ml-[6px] w-[60px] h-[25px] shrink-0 bg-[#f2f2f2] border border-[#d8dadc] flex items-center pl-[11px] gap-[5px]">
        <svg width="12" height="17" viewBox="0 0 12 17">
          <path d="M6 1a5 5 0 0 0-3 9v3h6v-3a5 5 0 0 0-3-9z" fill="#fff" stroke="#b0b2b4" />
          <rect x={4} y={14} width={4} height={2} fill="#b0b2b4" />
        </svg>
        <span className="w-[13px] h-[13px] rounded-full border border-[#a8aaac] bg-[#dcdcdc]"></span>
      </div>
    </div>
  )
}

function Flange({ cx, cy }: { cx: number; cy: number }) {
  return (
    <g transform={`translate(${cx} ${cy}) rotate(35)`}>
      <ellipse rx={4.500} ry={10} fill="#f3b31c" stroke="#e09a10" />
      <ellipse cx={-1} rx={1.500} ry={6} fill="#c9a860" />
    </g>
  )
}

function Scene() {
  return (
    <svg viewBox="492 240 754 584" className="absolute inset-0 w-full h-full">
      {/* pipe */}
      <path d="M636 372L1110 703" stroke="#a8c6d2" strokeWidth="20" />
      <path d="M633 376L1107 707" stroke="#9cb9c5" strokeWidth="9" />
      <path d="M630.500 380L1104.500 711" stroke="#84a0ac" strokeWidth="3" />
      <path d="M636 372L1110 703" stroke="#f5ae0c" strokeWidth="4" />
      <Flange cx={636} cy={373} />
      <path d="M627 366l6 5M642 361l-3 8" stroke="#f3b31c" strokeWidth="2" />
      <Flange cx={828} cy={510} />
      <path d="M833 496l-2 8" stroke="#f3b31c" strokeWidth="2.500" />
      <Flange cx={1109} cy={704} />
      <path d="M1113 707l9 8M1114 694l-4 6" stroke="#f3b31c" strokeWidth="2" />
      <circle cx={1106} cy={708} r={1} fill="#223" />
      <circle cx={1113} cy={704} r={1} fill="#223" />

      {/* triad */}
      <path d="M642 483L667 475L693 496L682 527L658 536L633 516Z" fill="none" stroke="#b08040" strokeWidth="1" />
      <path d="M667 468L674 448" stroke="#b8862c" strokeWidth="1" />
      <path d="M676 444l2 12-8 0z" fill="#c8821c" />
      <path d="M625 517L610 522" stroke="#8a5a1c" strokeWidth="1" />
      <path d="M608 522l12-5 0 7z" fill="#8f5a14" />
      <path d="M687 530L700 541" stroke="#b8862c" strokeWidth="1" />
      <path d="M709 546l-13-4 4-6z" fill="#d8a828" />
      <path d="M652 505L664 478" stroke="#12c012" strokeWidth="6.500" />
      <path d="M667 468l0 15-11-4z" fill="#10c810" />
      <path d="M655 500L663 481" stroke="#8ff08f" strokeWidth="1" />
      <path d="M652 505L672 519" stroke="#e01818" strokeWidth="6.500" />
      <path d="M687 530l-17-3 7-11z" fill="#e81820" />
      <path d="M657 507L675 520" stroke="#f8a0a0" strokeWidth="1" />
      <path d="M652 505L637 511" stroke="#1414c8" strokeWidth="6.500" />
      <path d="M625 517l13-11 4 12z" fill="#1010c0" />
      <text x={672} y={444} fontSize="22" fill="#a8701c" fontFamily="Liberation Sans, sans-serif">Y</text>
      <text x={596} y={534} fontSize="22" fill="#a8701c" fontFamily="Liberation Sans, sans-serif">Z</text>
      <text x={708} y={559} fontSize="22" fill="#a8701c" fontFamily="Liberation Sans, sans-serif">X</text>
      <circle cx={723} cy={518} r={5} fill="none" stroke="#111" strokeWidth="2" />
    </svg>
  )
}

export default function App() {
  return (
    <div className="w-[1246px] h-[824px] overflow-hidden flex flex-col bg-[#e2e6ea] text-[15px] tracking-[-0.25px] font-['Noto_Sans','Noto_Sans_CJK_SC',sans-serif]">
      <TopBar />
      <TabBar />
      <Ribbon />
      <Toolbar />
      <div className="flex-1 min-h-0 flex">
        <Panel />
        <div className="w-[3px] shrink-0 bg-[#c4c9ce] border-x border-[#e2e6ea]"></div>
        <div className="flex-1 min-w-0 flex flex-col">
          <DocTabs />
          <div className="relative flex-1 min-h-0 bg-linear-to-b from-white from-[6%] to-[#b4b4b4] overflow-hidden">
            <Scene />
            <div className="relative">
              <ViewBar />
              <div className="ml-[21px] mt-[4px] leading-[22px] text-[#1c1c1c] tracking-normal">
                <div>{'<单击中键>继续.'}</div>
                <div>{'单击"帮助/显示提示"按钮来取消这些提示.'}</div>
              </div>
            </div>
          </div>
        </div>
      </div>
    </div>
  )
}
